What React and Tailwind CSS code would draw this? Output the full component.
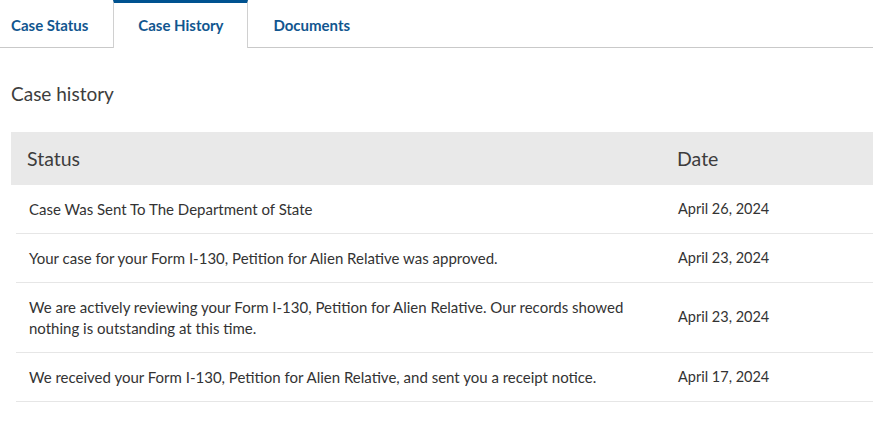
const rows = [
  { status: "Case Was Sent To The Department of State", date: "April 26, 2024" },
  { status: "Your case for your Form I-130, Petition for Alien Relative was approved.", date: "April 23, 2024" },
  {
    status:
      "We are actively reviewing your Form I-130, Petition for Alien Relative. Our records showed nothing is outstanding at this time.",
    date: "April 23, 2024",
  },
  {
    status: "We received your Form I-130, Petition for Alien Relative, and sent you a receipt notice.",
    date: "April 17, 2024",
  },
];

function Tabs() {
  return (
    <div className="flex h-[48px] border-b border-[#c9c9c9]">
      <button className="px-[11px] pt-[3px] text-[15px] font-bold text-[#11568f]">Case Status</button>
      <button className="relative -mb-px ml-[14px] w-[135px] border-x border-t-[3px] border-x-[#d0d0d0] border-t-[#005290] bg-white text-[15px] font-bold text-[#11568f]">
        Case History
      </button>
      <button className="ml-[25px] pt-[3px] text-[15px] font-bold text-[#11568f]">Documents</button>
    </div>
  );
}

export default function App() {
  return (
    <div className="min-h-[439px] bg-white text-[#333]" style={{ fontFamily: "Lato, 'Open Sans', sans-serif" }}>
      <Tabs />
      <h2 className="ml-[11px] mt-[34px] text-[19px] leading-[24px] text-[#3d3d3d]">Case history</h2>
      <div className="ml-[11px] mt-[26px]">
        <div className="flex h-[53px] items-center bg-[#e9e9e9] text-[19.5px] text-[#3d3d3d]">
          <div className="w-[650px] pl-[16px]">Status</div>
          <div className="pl-[16px]">Date</div>
        </div>
        <div className="ml-[5px]">
          {rows.map((r) => (
            <div key={r.date + r.status} className="flex items-center border-b border-[#e6e6e6] pt-[14px] pb-[13.5px] text-[15px] leading-[20.5px] text-[#333]">
              <div className="w-[645px] pl-[13px] pr-[30px]">{r.status}</div>
              <div className="pl-[17px] text-[14.5px]">{r.date}</div>
            </div>
          ))}
        </div>
      </div>
    </div>
  );
}
